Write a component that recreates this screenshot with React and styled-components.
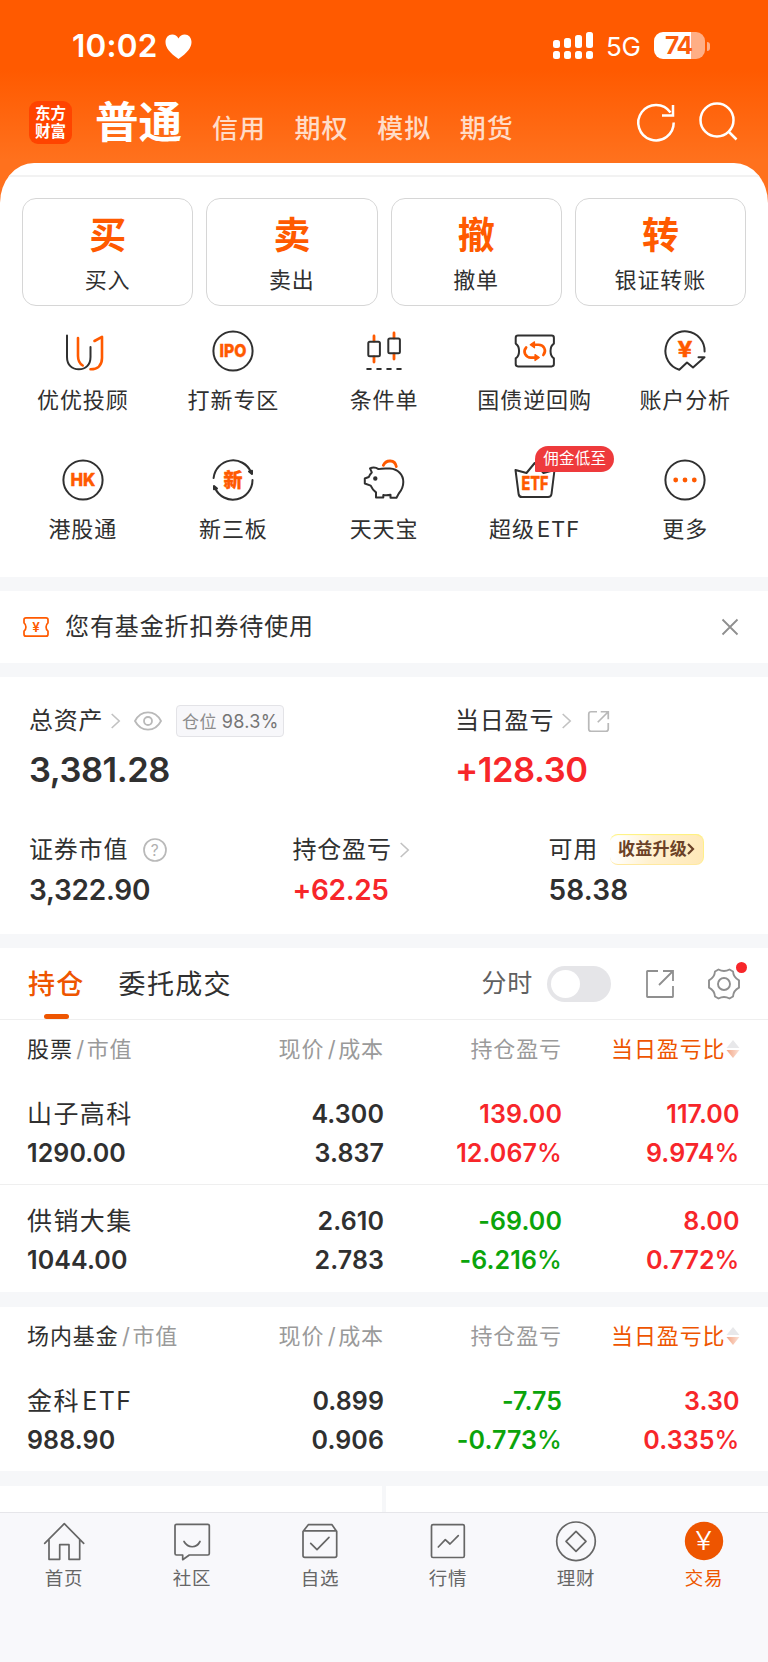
import React from 'react'
import styled, { createGlobalStyle } from 'styled-components'

const ORANGE = '#ff5a00'
const DEEP = '#ee5500'
const INK = '#303030'
const RED = '#f7262a'
const GREEN = '#0ba40b'
const BAND = '#f6f7f9'

const GlobalStyle = createGlobalStyle`
  * {
    box-sizing: border-box;
  }
  body {
    margin: 0;
    background: #fff;
    color: ${INK};
    font-family: Inter, "Noto Sans CJK SC", sans-serif;
    font-size: 22px;
  }
  svg {
    display: block;
    flex: none;
    overflow: visible;
  }
`

const Screen = styled.div`
  width: 768px;
  height: 1662px;
  display: flex;
  flex-direction: column;
  overflow: hidden;
  background: linear-gradient(#ff5a00 70px, #ff711d 160px);
`

/* status bar */

const StatusBar = styled.div`
  height: 92px;
  flex: none;
  display: flex;
  align-items: center;
  padding: 0 58px 0 72px;
  color: #fff;
`

const Clock = styled.span`
  width: 93px;
  font-size: 31.5px;
  font-weight: 600;
  letter-spacing: 0.2px;
  line-height: 40px;
  white-space: nowrap;
`

const Signal = styled.div`
  display: flex;
  align-items: flex-end;
  gap: 4px;
  height: 27px;
  margin: 0 0 2px auto;
`

const SignalBar = styled.i`
  width: 7px;
  height: ${(p) => p.$h + 11}px;
  display: flex;
  flex-direction: column;
  justify-content: space-between;

  &::before,
  &::after {
    content: '';
    border-radius: 2.5px;
    background: #fff;
  }
  &::before {
    height: ${(p) => p.$h}px;
  }
  &::after {
    height: 7.5px;
  }
`

const Network = styled.span`
  margin: 2px 0 0 13px;
  width: 35px;
  font-size: 26px;
  letter-spacing: -0.2px;
  line-height: 30px;
`

const Battery = styled.div`
  width: 51px;
  height: 27px;
  margin: 0 0 1px 13px;
  border-radius: 9px;
  background: linear-gradient(90deg, #fff 37px, #ffae85 37px);
  color: #fb5d0c;
  font-size: 24.5px;
  font-weight: 700;
  line-height: 27px;
  letter-spacing: -1.2px;
  padding-left: 11px;
`

const BatteryTip = styled.i`
  width: 3px;
  height: 9px;
  margin-left: 2px;
  border-radius: 0 4px 4px 0;
  background: #ffae85;
`

/* account switcher */

const Header = styled.header`
  height: 71px;
  flex: none;
  display: flex;
  align-items: flex-start;
  padding: 0 27px 0 29px;
`

const Logo = styled.div`
  width: 43px;
  height: 43px;
  margin-top: 9px;
  border-radius: 9px;
  background: #ff4400;
  color: #fff;
  font-family: "Noto Sans CJK SC", sans-serif;
  font-size: 15.5px;
  font-weight: 700;
  line-height: 18px;
  padding-top: 2px;
  text-align: center;
`

const MainTab = styled.h1`
  margin: 0 0 0 23px;
  width: 117px;
  font-size: 43.5px;
  font-weight: 700;
  line-height: 60px;
  color: #fff;
  white-space: nowrap;
`

const SubTab = styled.span`
  width: 82.6px;
  margin-top: 17px;
  font-size: 26px;
  font-weight: 500;
  letter-spacing: 1px;
  line-height: 40px;
  color: #ffdcc8;
`

const HeaderIcons = styled.div`
  display: flex;
  gap: 18px;
  margin: 8px 0 0 auto;
`

/* white sheet */

const Sheet = styled.main`
  flex: 1;
  background: #fff;
  border-radius: 34px 34px 0 0 / 40px 40px 0 0;
  overflow: hidden;
  display: flex;
  flex-direction: column;
`

const SheetLine = styled.div`
  height: 2px;
  flex: none;
  margin-top: 12px;
  background: #f2f2f2;
`

const Actions = styled.div`
  display: grid;
  grid-template-columns: repeat(4, 1fr);
  gap: 13px;
  padding: 21px 22px 0;
`

const Action = styled.div`
  height: 108px;
  border: 1px solid #d6d6d6;
  border-radius: 14px;
  display: flex;
  flex-direction: column;
  align-items: center;
`

const ActionGlyph = styled.b`
  margin-top: 16px;
  font-size: 37px;
  line-height: 42px;
  color: ${ORANGE};
`

const ActionLabel = styled.span`
  margin-top: 8px;
  line-height: 30px;
  font-size: 22px;
  letter-spacing: 0.9px;
`

const Shortcuts = styled.div`
  display: grid;
  grid-template-columns: repeat(5, 1fr);
  row-gap: 29px;
  padding: 23px 7.5px 0;
  height: 271px;
  align-content: start;
`

const Shortcut = styled.div`
  position: relative;
  height: 100px;
  display: flex;
  flex-direction: column;
  align-items: center;
`

const ShortcutLabel = styled.span`
  margin-top: 12px;
  font-size: 22px;
  letter-spacing: 0.9px;
  word-spacing: -5px;
  line-height: 30px;
  white-space: nowrap;
`

const Ribbon = styled.span`
  position: absolute;
  left: 76px;
  top: -12px;
  width: 79px;
  height: 26px;
  border-radius: 13px 13px 13px 1px;
  background: #ee3a3c;
  color: #fff;
  font-size: 15.5px;
  letter-spacing: 0.3px;
  line-height: 26px;
  text-align: center;
`

const Band = styled.div`
  height: ${(p) => p.$h || 14}px;
  flex: none;
  background: ${BAND};
`

const Notice = styled.div`
  height: 72px;
  flex: none;
  display: flex;
  align-items: center;
  padding: 0 30px 0 23px;
`

const NoticeText = styled.span`
  flex: 1;
  margin-left: 16px;
  font-size: 24px;
  letter-spacing: 0.9px;
  line-height: 34px;
`

/* assets */

const Assets = styled.section`
  height: 257px;
  flex: none;
  padding: 26px 29px 0;
`

const AssetRow = styled.div`
  display: grid;
  grid-template-columns: ${(p) => p.$cols};
  margin-top: ${(p) => p.$top || 0}px;
`

const AssetLabel = styled.div`
  height: 36px;
  display: flex;
  align-items: center;
  font-size: 24px;
  letter-spacing: 0.8px;
  white-space: nowrap;
  line-height: 36px;
`

const AssetValue = styled.div`
  font-size: ${(p) => (p.$large ? 34.5 : 28)}px;
  font-weight: 600;
  letter-spacing: ${(p) => p.$track || 0}px;
  line-height: 40px;
  margin-top: ${(p) => (p.$large ? 11 : 2)}px;
  color: ${(p) => p.$color || INK};
`

const ChevronSvg = styled.svg`
  margin-left: 8px;
`

const EyeSvg = styled.svg`
  margin-left: 14px;
`

const HelpSvg = styled.svg`
  margin-left: 15px;
`

const ShareBox = styled.span`
  margin-left: 17px;
`

const Ratio = styled.span`
  height: 32px;
  width: 108px;
  margin-left: 14px;
  border: 1px solid #e3e3e7;
  border-radius: 4px;
  background: #f7f7fa;
  color: #8d8d8d;
  font-size: 17px;
  letter-spacing: 0.3px;
  line-height: 31px;
  text-align: center;

  em {
    font-style: normal;
    color: #757575;
    font-size: 18px;
  }
`

const Upgrade = styled.span`
  width: 94px;
  height: 31px;
  margin: 0 0 1px 12px;
  border-radius: 8px;
  border-right: 1px solid #ffef8a;
  border-bottom: 1px solid #ffe9a0;
  background: linear-gradient(100deg, #fff 8%, #fff1cf 45%, #ffe9b8);
  box-shadow: inset 0 2px 1px -1px #fff27a;
  display: flex;
  align-items: center;
  padding-left: 8px;
  color: #6b4127;
  font-size: 17px;
  font-weight: 700;
  letter-spacing: 0.2px;
`

/* holdings */

const Toolbar = styled.div`
  height: 72px;
  flex: none;
  display: flex;
  padding: 0 28px 0 28px;
  border-bottom: 1px solid #efefef;
  line-height: 73px;
`

const Tab = styled.div`
  margin-right: 34px;
  font-size: 27px;
  font-weight: ${(p) => (p.$on ? 500 : 400)};
  letter-spacing: 1.3px;
  color: ${(p) => (p.$on ? DEEP : INK)};
  display: flex;
  flex-direction: column;
  align-items: center;

  &::after {
    content: '';
    display: ${(p) => (p.$on ? 'block' : 'none')};
    width: 25px;
    height: 5px;
    margin-top: -7px;
    border-radius: 3px;
    background: ${DEEP};
  }
`

const Tools = styled.div`
  margin-left: auto;
  display: flex;
  align-items: center;
  font-size: 25px;
  letter-spacing: 0.8px;
  color: #606060;
`

const Toggle = styled.i`
  width: 64px;
  height: 36px;
  margin: 0 35px 0 14px;
  border-radius: 18px;
  background: #e5e5e8;
  padding: 4px;

  &::before {
    content: '';
    display: block;
    width: 29px;
    height: 28px;
    border-radius: 50%;
    background: #fff;
  }
`

const GearBox = styled.div`
  position: relative;
  margin-left: 34px;

  &::after {
    content: '';
    position: absolute;
    width: 11px;
    height: 11px;
    top: -6px;
    right: -7px;
    border-radius: 50%;
    background: ${RED};
  }
`

const columns = '179.5px 177.5px 178px 177.5px'

const TableHead = styled.div`
  display: grid;
  grid-template-columns: ${columns};
  height: 60px;
  flex: none;
  padding-left: 27px;
  font-size: 22px;
  letter-spacing: 0.9px;
  line-height: 58px;
  color: #9a9a9a;
  white-space: nowrap;
`

const HeadCell = styled.span`
  text-align: ${(p) => (p.$left ? 'left' : 'right')};

  b {
    font-weight: 400;
    color: ${INK};
  }
  i {
    font-style: normal;
    margin: 0 1.5px 0 3.5px;
  }
`

const Sorted = styled.span`
  height: 58px;
  color: ${DEEP};
  display: flex;
  align-items: center;
  justify-content: flex-end;
`

const Row = styled.div`
  display: grid;
  grid-template-columns: ${columns};
  height: ${(p) => p.$h}px;
  flex: none;
  padding: ${(p) => p.$top || 15}px 0 0 27px;
  border-bottom: ${(p) => (p.$line ? '1px solid #efefef' : 0)};
`

const Cell = styled.div`
  display: flex;
  flex-direction: column;
  align-items: ${(p) => (p.$left ? 'flex-start' : 'flex-end')};
  font-size: 25px;
  font-weight: 600;
  letter-spacing: 0.1px;
  line-height: 39px;
  color: ${(p) => p.$color || INK};
`

const Percent = styled.small`
  font-size: 25px;
  font-weight: 500;
`

const StockName = styled.span`
  font-size: 25px;
  font-weight: 400;
  letter-spacing: 1.4px;
  word-spacing: -6px;
`

const Peek = styled.div`
  flex: none;
  height: 26px;
  display: grid;
  grid-template-columns: 1fr 1fr;
  gap: 4px;
  background: ${BAND};

  i {
    background: #fff;
  }
`

/* bottom navigation */

const BottomNav = styled.nav`
  flex: 1;
  display: grid;
  grid-template-columns: repeat(6, 1fr);
  border-top: 1px solid #e6e6ea;
  background: #f8f8fb;
  padding-top: 6px;
`

const NavItem = styled.div`
  display: flex;
  flex-direction: column;
  align-items: center;
  gap: 2px;
  font-size: 18.5px;
  letter-spacing: 0.7px;
  line-height: 26px;
  color: ${(p) => (p.$on ? DEEP : '#666')};
`

const Line = ({ children, size = 44, color = INK, width = 2 }) => (
  <svg width={size} height={size} viewBox={`0 0 ${size} ${size}`} fill='none' stroke={color}
    strokeWidth={width} strokeLinecap='round' strokeLinejoin='round'>
    {children}
  </svg>
)

const IconText = ({ children, x = 22, y, size, w, weight = 800 }) => (
  <text x={x} y={y} fontSize={size} textLength={w} lengthAdjust='spacingAndGlyphs' textAnchor='middle'
    fontWeight={weight} fill={ORANGE} stroke={ORANGE} strokeWidth='0.4'>{children}</text>
)

const Ring = () => <circle cx='22' cy='22' r='19.6' />

const AdvisorIcon = () => (
  <Line>
    <path d='M6 6.5V28c0 8 5 12.3 11.8 12.3S29.5 36 29.5 28V18' />
    <g stroke={ORANGE} strokeWidth='2.6'>
      <path d='M17 9v18c0 4.5 1.5 7.5 4.7 9.5' />
      <path d='M33.5 12 41 7.8V29c0 7-4 11.3-11.5 11.3' />
    </g>
  </Line>
)

const IpoIcon = () => (
  <Line><Ring /><IconText y={28.4} size={18} w={27}>IPO</IconText></Line>
)

const CandleIcon = () => (
  <Line>
    <g stroke={ORANGE} strokeWidth='2.8'>
      <path d='M12 7v5M12 28v5M32 4v5M32 25v5' />
    </g>
    <rect x='6.3' y='12.8' width='11.6' height='14.4' rx='1.5' />
    <rect x='26.3' y='9.4' width='11.6' height='14.8' rx='1.5' />
    <path d='M5.2 40h3.6M15.2 40h3.6M25.2 40h3.6M35.2 40h3.6' />
  </Line>
)

const RepoIcon = () => (
  <Line>
    <path d='M5 6.6h33.6q2.3 0 2.3 2.3v5.7c-4.5 3-4.5 11.8 0 14.8v5.7q0 2.3-2.3 2.3H5q-2.3 0-2.3-2.3v-5.7c4.5-3 4.5-11.8 0-14.8V8.9Q2.7 6.6 5 6.6z' />
    <g stroke={ORANGE} strokeWidth='2.6'>
      <path d='M21.5 15.8H25.500C31 15.8 34 21.5 30.3 26' />
      <path d='M22 28.6H18C12.5 28.6 9.5 22.9 13.2 18.4' />
    </g>
    <path d='M21.5 12.8v6l-4.3-3zM22 25.6v6l4.3-3z' fill={ORANGE} stroke={ORANGE} strokeWidth='1.2' />
  </Line>
)

const AnalysisIcon = () => (
  <Line>
    <path d='M41.6 22.5A19.6 19.6 0 1 0 16.3 40.7L24 33.5l6 5 11.5-10.3h-6' />
    <IconText y={27.7} size={21} w={15} weight={700}>¥</IconText>
  </Line>
)

const HkIcon = () => (
  <Line><Ring /><IconText y={28.4} size={18} w={25}>HK</IconText></Line>
)

const NewBoardIcon = () => (
  <Line>
    <path d='M2.6 20A19.6 19.6 0 0 1 40 14M41.5 22A19.6 19.6 0 0 1 4 30' />
    <path d='M38 13.5l3-.7v3.3zM6 30.5l-3 .7v-3.3z' fill={INK} />
    <IconText y={28.8} size={19} w={19}>新</IconText>
  </Line>
)

const PiggyIcon = () => (
  <Line>
    <path d='M21.3 7.3C24 1.5 33 1.2 34.3 8.6' stroke={ORANGE} strokeWidth='2.8' />
    <path d='M8 10.3c3-1.4 6-1 8.5.8C19 10.5 23 10.3 28 10.6c8 .5 13.3 6 13.3 13.4 0 5-1.5 8-4.5 11.5l-2.3 4.2H28.5v-2.9c-2.5.6-5 .6-7.2.3v2.3H14v-5c-2.3-1.7-4-3.8-5.3-6.8L2.8 25.5v-5l4-1.5c.6-1.8 1.6-3.3 3-4.6z' />
    <circle cx='13.3' cy='20.5' r='1.2' fill={INK} />
  </Line>
)

const BasketIcon = () => (
  <Line>
    <path d='M2.5 12l11 3L21.7 5l8.8 10 11-3-3 24q-.4 3-3.4 3H9q-3 0-3.4-3z' />
    <IconText y={32} size={19} w={27}>ETF</IconText>
  </Line>
)

const MoreIcon = () => (
  <Line>
    <Ring />
    <g fill={ORANGE} stroke='none'>
      <circle cx='12.7' cy='22' r='2.4' />
      <circle cx='22' cy='22' r='2.4' />
      <circle cx='31.3' cy='22' r='2.4' />
    </g>
  </Line>
)

const CouponIcon = () => (
  <svg width='26' height='20' viewBox='0 0 26 20' fill='none' stroke={ORANGE} strokeWidth='1.7' strokeLinejoin='round'>
    <path d='M3 .8h20q2 0 2 2v3c-2.6 2-2.6 6.4 0 8.4v3q0 2-2 2H3q-2 0-2-2v-3c2.6-2 2.6-6.4 0-8.4v-3q0-2 2-2z' />
    <text x='13' y='14.8' fontSize='13.5' fontWeight='600' textAnchor='middle' fill={ORANGE} stroke='none'>¥</text>
  </svg>
)

const Chevron = () => (
  <ChevronSvg width='9' height='16' viewBox='0 0 9 16' fill='none' stroke='#c2c2c2' strokeWidth='1.6'>
    <path d='M.7 1l7.5 7-7.5 7' />
  </ChevronSvg>
)

const Export = ({ size, color, width, r }) => (
  <svg width={size} height={size} viewBox='0 0 28 28' fill='none' stroke={color} strokeWidth={width}>
    <path d={`M12 1H${1 + r}Q1 1 1 ${1 + r}V${27 - r}Q1 27 ${1 + r} 27H${27 - r}Q27 27 27 ${27 - r}V16`} />
    <path d='M17 1h10v10M27 1L13 15' />
  </svg>
)

const shortcuts = [
  ['优优投顾', AdvisorIcon],
  ['打新专区', IpoIcon],
  ['条件单', CandleIcon],
  ['国债逆回购', RepoIcon],
  ['账户分析', AnalysisIcon],
  ['港股通', HkIcon],
  ['新三板', NewBoardIcon],
  ['天天宝', PiggyIcon],
  ['超级 ETF', BasketIcon, '佣金低至'],
  ['更多', MoreIcon],
]

const actions = [['买', '买入'], ['卖', '卖出'], ['撤', '撤单'], ['转', '银证转账']]

const stocks = [
  ['山子高科', '1290.00', '4.300', '3.837', '139.00', '12.067', '117.00', '9.974'],
  ['供销大集', '1044.00', '2.610', '2.783', '-69.00', '-6.216', '8.00', '0.772'],
]

const funds = [
  ['金科 ETF', '988.90', '0.899', '0.906', '-7.75', '-0.773', '3.30', '0.335'],
]

const navItems = [
  ['首页', <path d='M2.7 24.3 22.3 4.7l19.4 19.6M7 21v19.3h10.7V25.7H27v14.6h10.7V21' />],
  ['社区', <><path d='M6.5 5.3h31.3q1.5 0 1.5 1.5v27.7q0 1.5-1.5 1.5H19.3l-6.6 4.7V36H6.5Q5 36 5 34.5V6.8q0-1.5 1.5-1.5z' /><path d='M14 22.5c4 7 12.5 7 16 0' /></>],
  ['自选', <><path d='M5 12.5l5.3-6.8H34l4.7 6.8v24q0 1.8-1.8 1.8H6.8Q5 38.3 5 36.5zM5.5 11.9h33' /><path d='M12.7 24.3l6.3 6.4 12-12.4' /></>],
  ['行情', <><rect x='5.5' y='5.7' width='32.8' height='32.8' rx='1.5' /><path d='M12.3 28l7-7.3 4.7 4.3 8.3-8.3' /></>],
  ['理财', <><circle cx='22' cy='22.3' r='19.3' /><path d='M22 12.3l10 10-10 10-10-10z' /></>],
]

const Holding = ({ data, h, top, line }) => {
  const tone = data[4].startsWith('-') ? GREEN : RED
  return (
    <Row $h={h} $top={top} $line={line}>
      <Cell $left><StockName>{data[0]}</StockName><span>{data[1]}</span></Cell>
      <Cell><span>{data[2]}</span><span>{data[3]}</span></Cell>
      <Cell $color={tone}><span>{data[4]}</span><span>{data[5]}<Percent>%</Percent></span></Cell>
      <Cell $color={RED}><span>{data[6]}</span><span>{data[7]}<Percent>%</Percent></span></Cell>
    </Row>
  )
}

const HoldingHead = ({ name, id }) => (
  <TableHead>
    <HeadCell $left><b>{name}</b><i>/</i>市值</HeadCell>
    <HeadCell>现价<i>/</i>成本</HeadCell>
    <HeadCell>持仓盈亏</HeadCell>
    <Sorted>
      当日盈亏比
      <svg width='14' height='20' viewBox='0 0 14 20'>
        <defs>
          <linearGradient id={id} x2='1'>
            <stop offset='0' stopColor='#f3a585' />
            <stop offset='1' stopColor='#fbe3d8' />
          </linearGradient>
        </defs>
        <path d='M7 1l6.5 8H.5z' fill='#e8e8ea' />
        <path d='M7 19l6.5-8H.5z' fill={`url(#${id})`} />
      </svg>
    </Sorted>
  </TableHead>
)

const App = () => {
  return (
    <>
      <GlobalStyle />
      <Screen>
        <StatusBar>
          <Clock>10:02</Clock>
          <svg width='27' height='25' viewBox='0 0 27 25'>
            <path fill='#fff' d='M13.5 25C5 19 .5 14 .5 8 .5 3.5 3.5.5 7.2.5c2.8 0 5 1.4 6.3 4 1.3-2.6 3.5-4 6.3-4 3.7 0 6.7 3 6.7 7.5 0 6-4.5 11-13 17z' />
          </svg>
          <Signal>
            <SignalBar $h={7.5} />
            <SignalBar $h={9.5} />
            <SignalBar $h={12.5} />
            <SignalBar $h={16} />
          </Signal>
          <Network>5G</Network>
          <Battery>74</Battery>
          <BatteryTip />
        </StatusBar>
        <Header>
          <Logo>东方<br />财富</Logo>
          <MainTab>普通</MainTab>
          <SubTab>信用</SubTab>
          <SubTab>期权</SubTab>
          <SubTab>模拟</SubTab>
          <SubTab>期货</SubTab>
          <HeaderIcons>
            <svg width='44' height='44' viewBox='0 0 44 44' fill='none' stroke='#fff' strokeWidth='2.5'>
              <path d='M38.7 22.5A17.7 17.7 0 1 1 35.5 12.5' />
              <path d='M38 5v10.5H27' />
            </svg>
            <svg width='44' height='44' viewBox='0 0 44 44' fill='none' stroke='#fff' strokeWidth='2.5'>
              <circle cx='20' cy='20' r='16.5' />
              <path d='M31.5 31.5l8 8' />
            </svg>
          </HeaderIcons>
        </Header>
        <Sheet>
          <SheetLine />
          <Actions>
            {actions.map(([glyph, label]) => (
              <Action key={label}>
                <ActionGlyph>{glyph}</ActionGlyph>
                <ActionLabel>{label}</ActionLabel>
              </Action>
            ))}
          </Actions>
          <Shortcuts>
            {shortcuts.map(([label, Icon, tag]) => (
              <Shortcut key={label}>
                <Icon />
                {tag && <Ribbon>{tag}</Ribbon>}
                <ShortcutLabel>{label}</ShortcutLabel>
              </Shortcut>
            ))}
          </Shortcuts>
          <Band />
          <Notice>
            <CouponIcon />
            <NoticeText>您有基金折扣券待使用</NoticeText>
            <svg width='16' height='16' viewBox='0 0 16 16' stroke='#8f8f8f' strokeWidth='1.8'>
              <path d='M.5.5l15 15M15.5.5l-15 15' />
            </svg>
          </Notice>
          <Band />
          <Assets>
            <AssetRow $cols='426px 1fr'>
              <div>
                <AssetLabel>
                  总资产
                  <Chevron />
                  <EyeSvg width='28' height='20' viewBox='0 0 28 20' fill='none' stroke='#b9b9b9' strokeWidth='1.8'>
                    <path d='M1 10C7-1.500 21-1.500 27 10 21 21.5 7 21.5 1 10z' />
                    <circle cx='14' cy='10' r='4' />
                  </EyeSvg>
                  <Ratio>仓位 <em>98.3%</em></Ratio>
                </AssetLabel>
                <AssetValue $large $track={-0.45}>3,381.28</AssetValue>
              </div>
              <div>
                <AssetLabel>
                  当日盈亏
                  <Chevron />
                  <ShareBox><Export size={21} color='#b9b9b9' width={2.3} r={3} /></ShareBox>
                </AssetLabel>
                <AssetValue $large $track={-0.4} $color={RED}>+128.30</AssetValue>
              </div>
            </AssetRow>
            <AssetRow $cols='263.5px 256px 1fr' $top={42}>
              <div>
                <AssetLabel>
                  证券市值
                  <HelpSvg width='24' height='24' viewBox='0 0 24 24' fill='none' stroke='#b9b9b9' strokeWidth='1.7'>
                    <circle cx='12' cy='12' r='11' />
                    <text x='12' y='17.5' fontSize='15.5' textAnchor='middle' fill='#b0b0b0' stroke='none'>?</text>
                  </HelpSvg>
                </AssetLabel>
                <AssetValue $track={-0.25}>3,322.90</AssetValue>
              </div>
              <div>
                <AssetLabel>持仓盈亏<Chevron /></AssetLabel>
                <AssetValue $track={-0.35} $color={RED}>+62.25</AssetValue>
              </div>
              <div>
                <AssetLabel>
                  可用
                  <Upgrade>
                    收益升级
                    <svg width='8' height='12' viewBox='0 0 8 12' fill='none' stroke='#6b4127' strokeWidth='2.2'>
                      <path d='M1 1l5 5-5 5' />
                    </svg>
                  </Upgrade>
                </AssetLabel>
                <AssetValue $track={0.2}>58.38</AssetValue>
              </div>
            </AssetRow>
          </Assets>
          <Band />
          <Toolbar>
            <Tab $on>持仓</Tab>
            <Tab>委托成交</Tab>
            <Tools>
              分时
              <Toggle />
              <Export size={28} color='#8f8f8f' width={1.8} r={0.5} />
              <GearBox>
                <svg width='32' height='32' viewBox='0 0 32 32' fill='none' stroke='#8f8f8f' strokeWidth='1.9' strokeLinejoin='round'>
                  <path d='M10.5 1.5Q16 4.5 21.5 1.5L25 3.5Q25.5 9.5 31 12.3V19.7Q25.5 22.5 25 28.5L21.5 30.5Q16 27.5 10.5 30.5L7 28.5Q6.5 22.5 1 19.7V12.3Q6.5 9.5 7 3.5Z' />
                  <circle cx='16' cy='16' r='6' />
                </svg>
              </GearBox>
            </Tools>
          </Toolbar>
          <HoldingHead name='股票' id='sortStock' />
          <Holding data={stocks[0]} h={105} line />
          <Holding data={stocks[1]} h={107} top={17} />
          <Band $h={15} />
          <HoldingHead name='场内基金' id='sortFund' />
          <Holding data={funds[0]} h={104} />
          <Band $h={15} />
          <Peek><i /><i /></Peek>
          <BottomNav>
            {navItems.map(([label, shape]) => (
              <NavItem key={label}>
                <Line color='#666' width={1.7}>{shape}</Line>
                {label}
              </NavItem>
            ))}
            <NavItem $on>
              <svg width='44' height='44' viewBox='0 0 44 44'>
                <circle cx='22' cy='22' r='19.2' fill={DEEP} />
                <text x='22' y='31' fontSize='25' fontWeight='300' textLength='17' lengthAdjust='spacingAndGlyphs'
                  textAnchor='middle' fill='#fff'>¥</text>
              </svg>
              交易
            </NavItem>
          </BottomNav>
        </Sheet>
      </Screen>
    </>
  )
}

export default App
